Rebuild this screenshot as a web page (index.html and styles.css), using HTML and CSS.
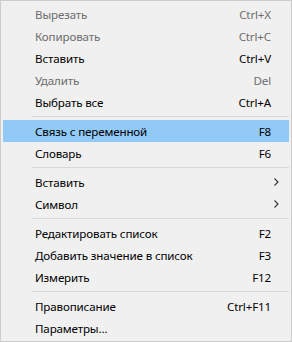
FILE: index.html
```html
<!DOCTYPE html>
<html lang="ru">
    <head>
        <meta charset="UTF-8" />
        <title>Контекстное меню</title>
        <link rel="stylesheet" href="styles.css">
    </head>
    <body>
        <div class="menu">
            <div class="item disabled"><span class="label">Вырезать</span><span class="key">Ctrl+X</span></div>
            <div class="item disabled"><span class="label">Копировать</span><span class="key">Ctrl+C</span></div>
            <div class="item"><span class="label">Вставить</span><span class="key">Ctrl+V</span></div>
            <div class="item disabled"><span class="label">Удалить</span><span class="key">Del</span></div>
            <div class="item"><span class="label">Выбрать все</span><span class="key">Ctrl+A</span></div>
            <div class="sep"></div>
            <div class="item active"><span class="label">Связь с переменной</span><span class="key">F8</span></div>
            <div class="item"><span class="label">Словарь</span><span class="key">F6</span></div>
            <div class="sep"></div>
            <div class="item"><span class="label">Вставить</span><span class="arrow"><svg width="5" height="8" viewBox="0 0 5 8"><path d="M0.5 0.5 L4 4 L0.5 7.5" fill="none" stroke="#333" stroke-width="1.1"/></svg></span></div>
            <div class="item"><span class="label">Символ</span><span class="arrow"><svg width="5" height="8" viewBox="0 0 5 8"><path d="M0.5 0.5 L4 4 L0.5 7.5" fill="none" stroke="#333" stroke-width="1.1"/></svg></span></div>
            <div class="sep"></div>
            <div class="item"><span class="label">Редактировать список</span><span class="key">F2</span></div>
            <div class="item"><span class="label">Добавить значение в список</span><span class="key">F3</span></div>
            <div class="item"><span class="label">Измерить</span><span class="key">F12</span></div>
            <div class="sep"></div>
            <div class="item"><span class="label">Правописание</span><span class="key">Ctrl+F11</span></div>
            <div class="item"><span class="label">Параметры...</span></div>
        </div>
    </body>
</html>
```

FILE: styles.css
```css
body {
    margin: 0;
    font-family: "Noto Sans", "Open Sans", sans-serif;
    font-size: 11.6px;
    letter-spacing: -0.15px;
    color: #000;
    background: #fff;
}

.menu {
    width: 292px;
    height: 342px;
    box-sizing: border-box;
    background: #f0f0f0;
    border: 1px solid #cccccc;
    padding: 2px 2px;
}

.item {
    height: 22px;
    display: flex;
    align-items: center;
    padding: 0 18px 0 32px;
}

.item .label {
    flex: 1;
    white-space: nowrap;
}

.item .key {
    white-space: nowrap;
}

.item .arrow {
    display: flex;
    align-items: center;
    margin-right: -8px;
}

.disabled {
    color: #6d6d6d;
}

.active {
    background: #91c9f7;
}

.sep {
    height: 1px;
    background: #d7d7d7;
    margin: 3px 0 3px 29px;
}
```
